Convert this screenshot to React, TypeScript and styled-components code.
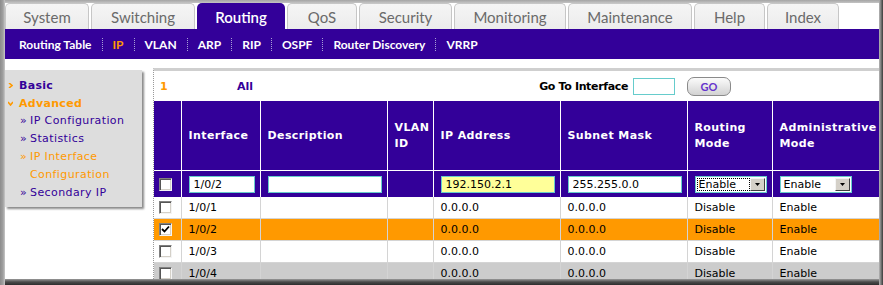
import React from 'react';
import styled, { createGlobalStyle, css } from 'styled-components';

const PURPLE = '#330099';
const ORANGE = '#ff9900';
const VERDANA = '"DejaVu Sans", Verdana, sans-serif';
const GEO = 'Lato, "Open Sans", sans-serif';

const Global = createGlobalStyle`
  html, body { margin: 0; padding: 0; background: #fff; overflow: hidden; }
  #root { width: 883px; height: 285px; }
`;

const Frame = styled.div`
  width: 883px;
  height: 285px;
  box-sizing: border-box;
  padding: 3px 4px 6px 5px;
  display: flex;
  flex-direction: column;
  overflow: hidden;
  background:
    linear-gradient(to right, #8c8c8c 0, #a0a0a0 3px, #c8c8c8 5px, transparent 5px),
    linear-gradient(to left, #3a3a3a 0, #7a7a7a 2px, #b8b8b8 4px, transparent 4px),
    linear-gradient(to top, #2e2e2e 0, #4a4a4a 3px, #9a9a9a 6px, transparent 6px),
    linear-gradient(to bottom, #a4a4a4 0, #c4c4c4 3px, transparent 3px),
    #fff;
`;

const TabBar = styled.nav`
  display: flex;
  gap: 2px;
  height: 26px;
  flex-shrink: 0;
`;

const Tab = styled.div<{ $w: number; $active?: boolean }>`
  width: ${(p) => p.$w}px;
  box-sizing: border-box;
  display: flex;
  align-items: center;
  justify-content: center;
  padding-top: 1px;
  font-family: ${GEO};
  font-size: 15px;
  border-radius: 5px 5px 0 0;
  ${(p) =>
    p.$active
      ? css`
          background: ${PURPLE};
          color: #fff;
          font-weight: 600;
        `
      : css`
          background: linear-gradient(#f5f5f5, #ececec);
          color: #6a6a6a;
          border: 1px solid #c6c6c6;
          border-bottom: none;
        `}
`;

const SubNav = styled.div`
  height: 30px;
  flex-shrink: 0;
  background: ${PURPLE};
  display: flex;
  align-items: center;
  padding-left: 4px;
`;

const NavItem = styled.span<{ $active?: boolean }>`
  padding: 0 10px;
  font-family: ${GEO};
  font-weight: 700;
  font-size: 12px;
  color: ${(p) => (p.$active ? ORANGE : '#fff')};
`;

const NavSep = styled.span`
  height: 13px;
  border-left: 1px dotted #a89fd6;
`;

const Body = styled.div`
  flex: 1;
  min-height: 0;
  display: flex;
  align-items: flex-start;
`;

const SideMenu = styled.aside`
  margin-top: 11px;
  width: 137px;
  height: 137px;
  flex-shrink: 0;
  box-sizing: border-box;
  padding: 6px 0 0 3px;
  background: #dddddd;
  box-shadow: 2px 2px 2px #8a8a8a;
`;

const MenuHead = styled.div<{ $color: string }>`
  display: flex;
  align-items: center;
  height: 18px;
  font-family: ${VERDANA};
  font-size: 11px;
  font-weight: 700;
  letter-spacing: 0.3px;
  color: ${(p) => p.$color};
  svg {
    margin-right: 6px;
    flex-shrink: 0;
  }
`;

const MenuLink = styled.div<{ $color: string }>`
  display: flex;
  padding-left: 12px;
  line-height: 18px;
  font-family: ${VERDANA};
  font-size: 11px;
  letter-spacing: 0.4px;
  color: ${(p) => p.$color};
`;

const Bullet = styled.span`
  width: 10px;
  flex-shrink: 0;
`;

const Main = styled.main`
  align-self: stretch;
  flex: 1;
  min-width: 0;
  margin: 9px 0 0 11px;
  border-top: 3px solid #cfcfcf;
  border-left: 1px dotted #999;
  overflow: hidden;
`;

const ToolRow = styled.div`
  height: 30px;
  display: flex;
  align-items: center;
  padding-left: 6px;
  font-family: ${VERDANA};
  font-size: 11px;
  font-weight: 700;
`;

const PageNum = styled.span`
  width: 77px;
  color: ${ORANGE};
`;

const AllLink = styled.span`
  color: ${PURPLE};
`;

const GoGroup = styled.div`
  margin-left: auto;
  margin-right: 148px;
  display: flex;
  align-items: center;
`;

const GoLabel = styled.span`
  color: #000;
  margin-right: 5px;
  letter-spacing: -0.35px;
`;

const Field = styled.input<{ $w: number; $bg?: string }>`
  width: ${(p) => p.$w}px;
  height: 17px;
  box-sizing: border-box;
  border: 1px solid #66cccc;
  background: ${(p) => p.$bg || '#fff'};
  padding: 0 0 0 4px;
  margin: 0;
  font-family: ${VERDANA};
  font-size: 11px;
  color: #000;
  outline: none;
  vertical-align: middle;
`;

const GoButton = styled.button`
  margin-left: 12px;
  width: 44px;
  height: 19px;
  border-radius: 7px;
  border: 1px solid #8a8a8a;
  background: linear-gradient(#fbfbfb, #d2d2d2);
  color: #6633cc;
  font-family: ${GEO};
  font-size: 11px;
  font-weight: 700;
  padding: 0;
`;

const Grid = styled.table`
  width: 725px;
  table-layout: fixed;
  border-collapse: collapse;
  font-family: ${VERDANA};
  font-size: 11px;
`;

const Th = styled.th<{ $last?: boolean }>`
  height: 69px;
  padding: 0 0 0 7px;
  background: ${PURPLE};
  color: #fff;
  font-weight: 700;
  font-size: 11px;
  letter-spacing: 0.4px;
  line-height: 16px;
  text-align: left;
  vertical-align: middle;
  border-right: ${(p) => (p.$last ? 'none' : '1px solid #fff')};
`;

const EditCell = styled.td<{ $pad?: number }>`
  height: 26px;
  padding: 0 0 0 ${(p) => p.$pad ?? 7}px;
  background: ${PURPLE};
  border-top: 1px solid #fff;
  border-right: 1px solid #fff;
  vertical-align: middle;
`;

const DataRow = styled.tr<{ $bg: string }>`
  background: ${(p) => p.$bg};
`;

const Td = styled.td<{ $pad?: number }>`
  height: 21px;
  padding: 0 0 0 ${(p) => p.$pad ?? 7}px;
  color: #000;
  white-space: nowrap;
  border-right: 1px solid #d4d4d4;
  border-bottom: 1px solid #d4d4d4;
  vertical-align: middle;
`;

const Check = styled.span`
  display: inline-flex;
  align-items: center;
  justify-content: center;
  width: 13px;
  height: 13px;
  box-sizing: border-box;
  background: #fff;
  border: 1px solid;
  border-color: #808080 #f4f4f4 #f4f4f4 #808080;
  box-shadow: inset 1px 1px 0 #555, inset -1px -1px 0 #d4d0c8;
  vertical-align: middle;
`;

const Select = styled.div<{ $w: number }>`
  width: ${(p) => p.$w}px;
  height: 17px;
  box-sizing: border-box;
  border: 1px solid #66cccc;
  background: #fff;
  display: flex;
  align-items: center;
  padding: 1px;
`;

const SelText = styled.span<{ $focus?: boolean }>`
  flex: 1;
  height: 13px;
  line-height: 13px;
  padding-left: 2px;
  font-size: 11px;
  color: #000;
  box-sizing: border-box;
  ${(p) =>
    p.$focus &&
    css`
      outline: 1px dotted #000;
      outline-offset: -1px;
    `}
`;

const SelBtn = styled.span`
  width: 15px;
  height: 13px;
  box-sizing: border-box;
  background: #d4d0c8;
  border: 1px solid;
  border-color: #f4f4f4 #404040 #404040 #f4f4f4;
  display: flex;
  align-items: center;
  justify-content: center;
`;

const Arrow = ({ down }: { down?: boolean }) => (
  <svg width="5" height="5" viewBox="0 0 5 5">
    {down ? (
      <path d="M0 1 L2.5 4 L5 1" stroke={ORANGE} strokeWidth="1.6" fill="none" />
    ) : (
      <path d="M1 0 L4 2.5 L1 5" stroke={ORANGE} strokeWidth="1.6" fill="none" />
    )}
  </svg>
);

const Tick = () => (
  <svg width="9" height="9" viewBox="0 0 9 9">
    <path d="M1 4 L3.5 6.5 L8 1.5" stroke="#000" strokeWidth="1.8" fill="none" />
  </svg>
);

const Caret = () => (
  <svg width="5" height="3" viewBox="0 0 5 3">
    <path d="M0 0 H5 L2.5 3 Z" fill="#000" />
  </svg>
);

const DropDown = ({ w, focus }: { w: number; focus?: boolean }) => (
  <Select $w={w}>
    <SelText $focus={focus}>Enable</SelText>
    <SelBtn>
      <Caret />
    </SelBtn>
  </Select>
);

const tabs = [
  { label: 'System', w: 84 },
  { label: 'Switching', w: 104 },
  { label: 'Routing', w: 88, active: true },
  { label: 'QoS', w: 70 },
  { label: 'Security', w: 93 },
  { label: 'Monitoring', w: 112 },
  { label: 'Maintenance', w: 124 },
  { label: 'Help', w: 71 },
  { label: 'Index', w: 72 },
];

const subnav = ['Routing Table', 'IP', 'VLAN', 'ARP', 'RIP', 'OSPF', 'Router Discovery', 'VRRP'];

const rows = [
  { port: '1/0/1', bg: '#fff', checked: false },
  { port: '1/0/2', bg: ORANGE, checked: true },
  { port: '1/0/3', bg: '#fff', checked: false },
  { port: '1/0/4', bg: '#cccccc', checked: false },
];

const cols = [27, 79, 127, 46, 127, 127, 85, 107];

export default function App() {
  return (
    <>
      <Global />
      <Frame>
        <TabBar>
          {tabs.map((t) => (
            <Tab key={t.label} $w={t.w} $active={t.active}>
              {t.label}
            </Tab>
          ))}
        </TabBar>
        <SubNav>
          {subnav.map((s, i) => (
            <React.Fragment key={s}>
              {i > 0 && <NavSep />}
              <NavItem $active={s === 'IP'}>{s}</NavItem>
            </React.Fragment>
          ))}
        </SubNav>
        <Body>
          <SideMenu>
            <MenuHead $color={PURPLE}>
              <Arrow />
              Basic
            </MenuHead>
            <MenuHead $color={ORANGE}>
              <Arrow down />
              Advanced
            </MenuHead>
            <MenuLink $color={PURPLE}>
              <Bullet>»</Bullet>
              <span>IP Configuration</span>
            </MenuLink>
            <MenuLink $color={PURPLE}>
              <Bullet>»</Bullet>
              <span>Statistics</span>
            </MenuLink>
            <MenuLink $color={ORANGE}>
              <Bullet>»</Bullet>
              <span>
                IP Interface
                <br />
                Configuration
              </span>
            </MenuLink>
            <MenuLink $color={PURPLE}>
              <Bullet>»</Bullet>
              <span>Secondary IP</span>
            </MenuLink>
          </SideMenu>
          <Main>
            <ToolRow>
              <PageNum>1</PageNum>
              <AllLink>All</AllLink>
              <GoGroup>
                <GoLabel>Go To Interface</GoLabel>
                <Field $w={42} readOnly defaultValue="" />
                <GoButton>GO</GoButton>
              </GoGroup>
            </ToolRow>
            <Grid>
              <colgroup>
                {cols.map((w, i) => (
                  <col key={i} style={{ width: w }} />
                ))}
              </colgroup>
              <thead>
                <tr>
                  <Th />
                  <Th>Interface</Th>
                  <Th>Description</Th>
                  <Th>
                    VLAN
                    <br />
                    ID
                  </Th>
                  <Th>IP Address</Th>
                  <Th>Subnet Mask</Th>
                  <Th>
                    Routing
                    <br />
                    Mode
                  </Th>
                  <Th $last>
                    Administrative
                    <br />
                    Mode
                  </Th>
                </tr>
              </thead>
              <tbody>
                <tr>
                  <EditCell $pad={5}>
                    <Check />
                  </EditCell>
                  <EditCell>
                    <Field $w={66} readOnly defaultValue="1/0/2" />
                  </EditCell>
                  <EditCell>
                    <Field $w={114} readOnly defaultValue="" />
                  </EditCell>
                  <EditCell />
                  <EditCell>
                    <Field $w={114} $bg="#ffff99" readOnly defaultValue="192.150.2.1" />
                  </EditCell>
                  <EditCell>
                    <Field $w={114} readOnly defaultValue="255.255.0.0" />
                  </EditCell>
                  <EditCell>
                    <DropDown w={72} focus />
                  </EditCell>
                  <EditCell>
                    <DropDown w={72} />
                  </EditCell>
                </tr>
                {rows.map((r) => (
                  <DataRow key={r.port} $bg={r.bg}>
                    <Td $pad={5}>
                      <Check>{r.checked && <Tick />}</Check>
                    </Td>
                    <Td>{r.port}</Td>
                    <Td />
                    <Td />
                    <Td>0.0.0.0</Td>
                    <Td>0.0.0.0</Td>
                    <Td>Disable</Td>
                    <Td>Enable</Td>
                  </DataRow>
                ))}
              </tbody>
            </Grid>
          </Main>
        </Body>
      </Frame>
    </>
  );
}
